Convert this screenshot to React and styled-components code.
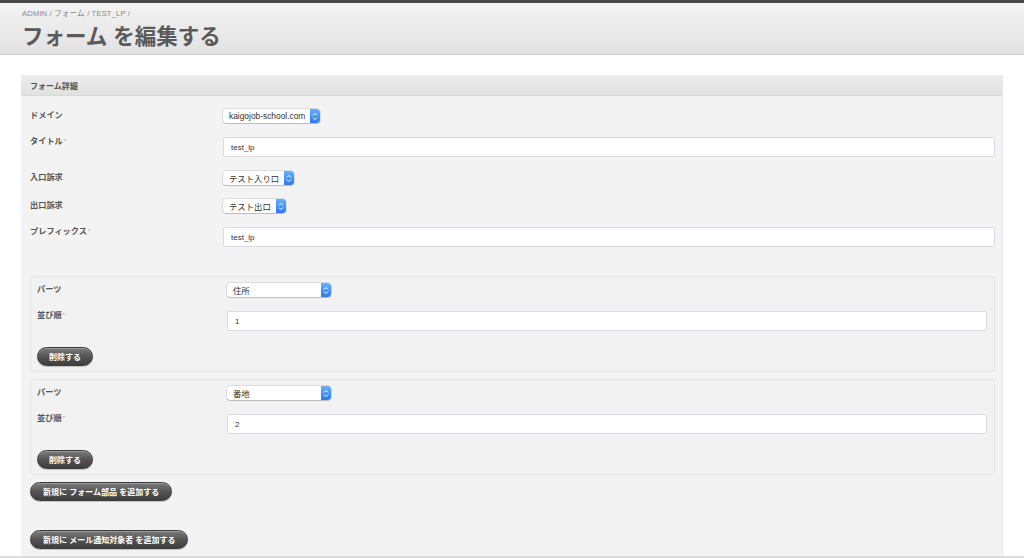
import React from "react";
import styled, { createGlobalStyle } from "styled-components";

const GlobalStyle = createGlobalStyle`
  html, body {
    margin: 0;
    padding: 0;
    background: #ffffff;
    font-family: "Liberation Sans", "Noto Sans CJK JP", sans-serif;
    color: #555;
  }
  * {
    box-sizing: border-box;
  }
`;

const Page = styled.div`
  width: 1024px;
  min-height: 558px;
  display: flex;
  flex-direction: column;
  border-top: 3px solid #474747;
`;

const Header = styled.header`
  height: 52px;
  padding: 6px 0 0 22px;
  background: linear-gradient(to bottom, #f3f3f3 0%, #e2e2e2 100%);
  border-bottom: 1px solid #cfcfcf;
`;

const Crumbs = styled.div`
  font-size: 7.7px;
  line-height: 10px;
  color: #888;
  letter-spacing: 0.1px;
`;

const PageTitle = styled.h1`
  margin: 5px 0 0;
  font-size: 21.5px;
  line-height: 26px;
  font-weight: 700;
  color: #5a5a5a;
`;

const Main = styled.main`
  padding: 20px 21px 0 21px;
`;

const Panel = styled.section`
  background: #f3f3f3;
  border-right: 1px solid #e6e6e6;
`;

const PanelHead = styled.div`
  height: 21px;
  padding-left: 9px;
  display: flex;
  align-items: center;
  font-size: 8px;
  font-weight: 700;
  color: #555;
  background: linear-gradient(to bottom, #ececec 0%, #e1e1e1 100%);
  border-bottom: 1px solid #d9d9d9;
`;

const PanelBody = styled.div`
  padding: 13px 7px 7px 9px;
  display: flex;
  flex-direction: column;
`;

const Row = styled.div`
  display: grid;
  grid-template-columns: 20% 80%;
  align-items: start;
  margin-bottom: ${(p) => p.$gap ?? 14}px;
`;

const Label = styled.div`
  font-size: 8.2px;
  font-weight: 700;
  line-height: ${(p) => (p.$input ? "10px" : "14px")};
  color: #555;
  sup {
    font-size: 6px;
    color: #aaa;
    font-weight: 400;
    vertical-align: top;
    margin-left: 1px;
    line-height: 8px;
  }
`;

const SelectBox = styled.div`
  display: inline-flex;
  align-items: center;
  justify-self: start;
  height: 14px;
  width: ${(p) => (p.$width ? `${p.$width}px` : "auto")};
  background: #fff;
  border-radius: 3px;
  box-shadow: 0 0 0 0.5px rgba(0, 0, 0, 0.18), 0 1px 1px rgba(0, 0, 0, 0.15);
  font-size: 8.4px;
  color: #333;
  padding-left: 6px;
  overflow: hidden;
`;

const SelectText = styled.span`
  flex: 1;
  white-space: nowrap;
  margin-right: 5px;
`;

const Arrow = styled.span`
  width: 10px;
  height: 14px;
  border-radius: 0 3px 3px 0;
  background: linear-gradient(to bottom, #68b0fc 0%, #2a7bf0 100%);
  display: flex;
  align-items: center;
  justify-content: center;
`;

const TextInput = styled.div`
  height: 20px;
  background: #fff;
  border: 1px solid #d8dce2;
  border-radius: 2px;
  padding-left: 7px;
  display: flex;
  align-items: center;
  font-size: 8px;
  color: #333;
`;

const Spacer = styled.div`
  height: ${(p) => p.$h}px;
`;

const SubPanel = styled.div`
  border: 1px solid #e6e6e6;
  border-radius: 3px;
  background: #f2f2f2;
  padding: 6px 7px 5px 6px;
  margin-bottom: 7px;
`;

const PillButton = styled.button`
  align-self: flex-start;
  height: 19px;
  padding: 0 ${(p) => p.$pad ?? 11}px;
  border-radius: 10px;
  border: 1px solid #3c3c3c;
  background: linear-gradient(to bottom, #7a7a7a 0%, #515151 55%, #3e3e3e 100%);
  box-shadow: inset 0 1px 0 rgba(255, 255, 255, 0.25), 0 1px 1px rgba(0, 0, 0, 0.2);
  color: #fff;
  font-family: "Liberation Sans", "Noto Sans CJK JP", sans-serif;
  font-size: 8px;
  font-weight: 700;
  white-space: nowrap;
  cursor: pointer;
`;

const Footer = styled.div`
  height: 3px;
  background: #dcdcdc;
`;

const Chevrons = () => (
  <svg width="6" height="9" viewBox="0 0 6 9">
    <path d="M1 3.4 L3 1.4 L5 3.4" fill="none" stroke="#fff" strokeWidth="1" />
    <path d="M1 5.6 L3 7.6 L5 5.6" fill="none" stroke="#fff" strokeWidth="1" />
  </svg>
);

const Select = ({ value, width }) => (
  <SelectBox $width={width}>
    <SelectText>{value}</SelectText>
    <Arrow>
      <Chevrons />
    </Arrow>
  </SelectBox>
);

const FieldLabel = ({ children, required, input }) => (
  <Label $input={input}>
    {children}
    {required && <sup>*</sup>}
  </Label>
);

const PartBlock = ({ part, order }) => (
  <SubPanel>
    <Row>
      <FieldLabel>パーツ</FieldLabel>
      <Select value={part} width={104} />
    </Row>
    <Row $gap={15}>
      <FieldLabel required input>
        並び順
      </FieldLabel>
      <TextInput>{order}</TextInput>
    </Row>
    <PillButton>削除する</PillButton>
  </SubPanel>
);

export default function App() {
  return (
    <>
      <GlobalStyle />
      <Page>
        <Header>
          <Crumbs>ADMIN / フォーム / TEST_LP /</Crumbs>
          <PageTitle>フォーム を編集する</PageTitle>
        </Header>
        <Main>
          <Panel>
            <PanelHead>フォーム詳細</PanelHead>
            <PanelBody>
              <Row>
                <FieldLabel>ドメイン</FieldLabel>
                <Select value="kaigojob-school.com" />
              </Row>
              <Row>
                <FieldLabel required input>
                  タイトル
                </FieldLabel>
                <TextInput>test_lp</TextInput>
              </Row>
              <Row>
                <FieldLabel>入口訴求</FieldLabel>
                <Select value="テスト入り口" />
              </Row>
              <Row>
                <FieldLabel>出口訴求</FieldLabel>
                <Select value="テスト出口" />
              </Row>
              <Row $gap={0}>
                <FieldLabel required input>
                  プレフィックス
                </FieldLabel>
                <TextInput>test_lp</TextInput>
              </Row>
              <Spacer $h={29} />
              <PartBlock part="住所" order="1" />
              <PartBlock part="番地" order="2" />
              <PillButton $pad={12}>新規に フォーム部品 を追加する</PillButton>
              <Spacer $h={29} />
              <PillButton $pad={12}>新規に メール通知対象者 を追加する</PillButton>
            </PanelBody>
          </Panel>
        </Main>
        <Footer />
      </Page>
    </>
  );
}
